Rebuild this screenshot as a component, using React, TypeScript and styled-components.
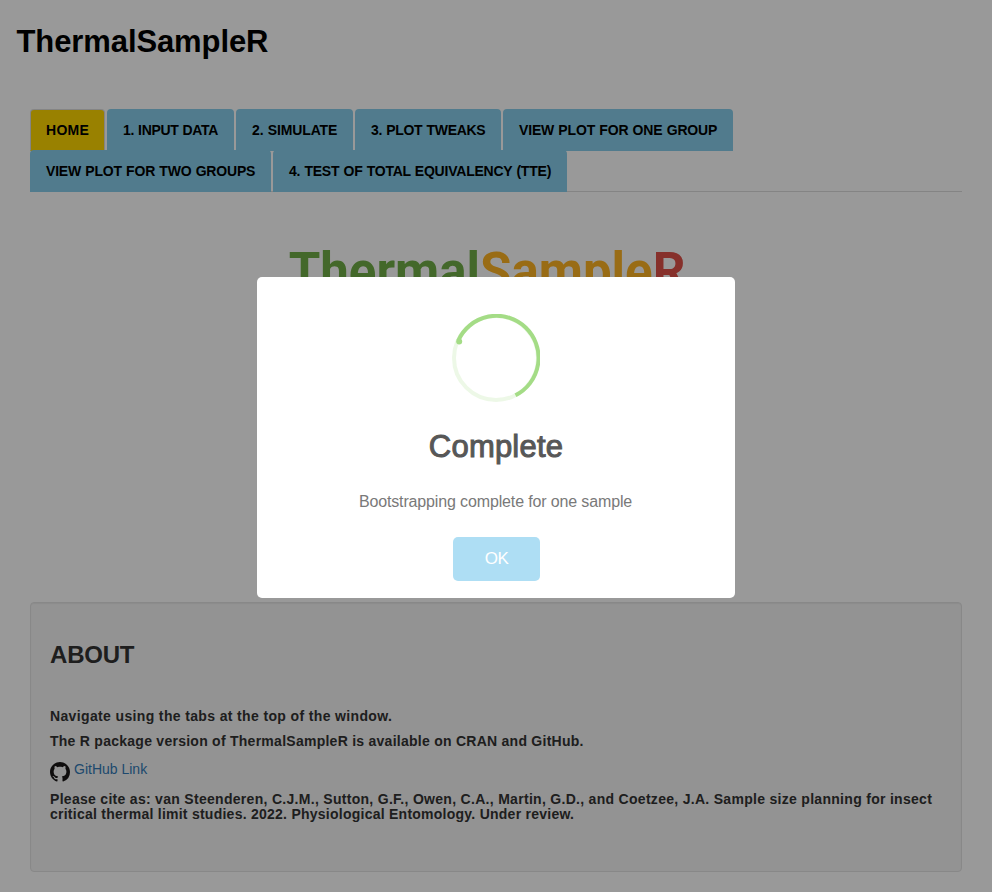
import React from "react";
import styled, { createGlobalStyle } from "styled-components";

const GlobalStyle = createGlobalStyle`
  *, *::before, *::after { box-sizing: border-box; }
  html, body { margin: 0; height: 892px; overflow: hidden; background: #fff; }
  body { font: 14px/20px "Liberation Sans", Arial, sans-serif; color: #333; }
`;

const Page = styled.div`
  height: 892px;
  padding: 21px 30px 0;
  background: #fff;
  display: flex;
  flex-direction: column;
`;
const Title = styled.h1`
  margin: 0 0 0 -13.5px;
  height: 88px;
  font-size: 31px;
  line-height: 41px;
  letter-spacing: -0.1px;
  color: #000;
`;
const TabList = styled.ul`
  list-style: none;
  margin: 0;
  padding: 0;
  height: 83px;
  display: flex;
  flex-wrap: wrap;
  align-content: flex-start;
  column-gap: 2px;
  border-bottom: 1px solid #ddd;
`;
const Tab = styled.li<{ $width: number; $tracking: number; $active?: boolean }>`
  width: ${(p) => p.$width}px;
  height: 42px;
  margin-bottom: -1px;
  padding: 10px 0 10px 15px;
  border: 1px solid ${(p) => (p.$active ? "#ddd" : "transparent")};
  ${(p) => p.$active && "border-bottom-color: transparent;"}
  border-radius: 4px 4px 0 0;
  background: ${(p) => (p.$active ? "#ffd700" : "#87ceeb")};
  color: #000;
  font-weight: 700;
  letter-spacing: ${(p) => p.$tracking}px;
  word-spacing: ${(p) => (p.$active ? 0 : 0.5)}px;
  white-space: nowrap;
`;
const Banner = styled.div`
  height: 410px;
  padding: 48px 18px 0 0;
  text-align: center;
  font: 700 51px/64px Roboto, sans-serif;
  color: #70ad47;
`;
const Accent = styled.span<{ $color: string }>`
  color: ${(p) => p.$color};
`;
const Well = styled.section`
  height: 270px;
  padding: 38px 19px 19px;
  border: 1px solid #e3e3e3;
  border-radius: 4px;
  background: #f5f5f5;
  box-shadow: inset 0 1px 1px rgba(0, 0, 0, 0.05);
`;
const Heading = styled.h2`
  margin: 0 0 40px;
  font-size: 24px;
  line-height: 28px;
  letter-spacing: -0.2px;
`;
const Note = styled.p<{ $tracking: number; $gap?: number }>`
  margin: 0 0 ${(p) => p.$gap ?? 0}px;
  font-weight: 700;
  line-height: 15px;
  letter-spacing: ${(p) => p.$tracking}px;
  white-space: nowrap;
`;
const RepoLink = styled.a`
  display: flex;
  height: 33px;
  gap: 4px;
  color: #337ab7;
  text-decoration: none;
  line-height: 20px;
`;
const RepoIcon = styled.svg`
  width: 20px;
  height: 20px;
  margin-top: 3px;
  fill: #191717;
`;
const Overlay = styled.div`
  position: fixed;
  inset: 0;
  background: rgba(0, 0, 0, 0.4);
`;
const Modal = styled.div`
  position: fixed;
  left: 257px;
  top: 277px;
  width: 478px;
  height: 321px;
  padding: 37px 17px 17px;
  border-radius: 5px;
  background: #fff;
  display: flex;
  flex-direction: column;
  align-items: center;
`;
const Ring = styled.svg`
  width: 88px;
  height: 88px;
  flex: none;
`;
const ModalTitle = styled.h2`
  margin: 25px 0;
  font-size: 31px;
  line-height: 40px;
  font-weight: 400;
  -webkit-text-stroke: 1px #575757;
  letter-spacing: 0.2px;
  color: #575757;
`;
const ModalText = styled.p`
  margin: 0 1px 0 0;
  font-size: 16px;
  line-height: 20px;
  letter-spacing: -0.14px;
  color: #797979;
`;
const OkButton = styled.button`
  width: 87px;
  height: 44px;
  margin-top: 25px;
  padding: 0 0 0 1px;
  border: 0;
  border-radius: 5px;
  background: #aedef4;
  color: #fff;
  font: 17px "Liberation Sans", Arial, sans-serif;
  letter-spacing: -0.5px;
`;

const tabs = [
  { label: "HOME", width: 75, tracking: 0.3, active: true },
  { label: "1. INPUT DATA", width: 127, tracking: -0.32 },
  { label: "2. SIMULATE", width: 117, tracking: -0.12 },
  { label: "3. PLOT TWEAKS", width: 146, tracking: -0.29 },
  { label: "VIEW PLOT FOR ONE GROUP", width: 230, tracking: -0.16 },
  { label: "VIEW PLOT FOR TWO GROUPS", width: 241, tracking: -0.18 },
  { label: "4. TEST OF TOTAL EQUIVALENCY (TTE)", width: 294, tracking: -0.22 },
];

export default function App() {
  return (
    <>
      <GlobalStyle />
      <Page>
        <Title>ThermalSampleR</Title>
        <TabList>
          {tabs.map((t) => (
            <Tab key={t.label} $width={t.width} $tracking={t.tracking} $active={t.active}>
              {t.label}
            </Tab>
          ))}
        </TabList>
        <Banner>
          Thermal<Accent $color="#ffb423">Sample</Accent>
          <Accent $color="#df5048">R</Accent>
        </Banner>
        <Well>
          <Heading>ABOUT</Heading>
          <Note $gap={10} $tracking={0.36}>Navigate using the tabs at the top of the window.</Note>
          <Note $gap={10} $tracking={0.26}>
            The R package version of ThermalSampleR is available on CRAN and GitHub.
          </Note>
          <RepoLink href="#">
            <RepoIcon viewBox="0 0 16 16">
              <path d="M8 0C3.58 0 0 3.58 0 8c0 3.54 2.29 6.53 5.47 7.59.4.07.55-.17.55-.38 0-.19-.01-.82-.01-1.49-2.01.37-2.53-.49-2.69-.94-.09-.23-.48-.94-.82-1.13-.28-.15-.68-.52-.01-.53.63-.01 1.08.58 1.23.82.72 1.21 1.87.87 2.33.66.07-.52.28-.87.51-1.07-1.78-.2-3.64-.89-3.64-3.95 0-.87.31-1.59.82-2.15-.08-.2-.36-1.02.08-2.12 0 0 .67-.21 2.2.82.64-.18 1.32-.27 2-.27s1.36.09 2 .27c1.53-1.04 2.2-.82 2.2-.82.44 1.1.16 1.92.08 2.12.51.56.82 1.27.82 2.15 0 3.07-1.87 3.75-3.65 3.95.29.25.54.73.54 1.48 0 1.07-.01 1.93-.01 2.2 0 .21.15.46.55.38A8.01 8.01 0 0 0 16 8c0-4.42-3.58-8-8-8z" />
            </RepoIcon>
            GitHub Link
          </RepoLink>
          <Note $tracking={0.295}>
            Please cite as: van Steenderen, C.J.M., Sutton, G.F., Owen, C.A., Martin, G.D., and
            Coetzee, J.A. Sample size planning for insect
          </Note>
          <Note $tracking={0.25}>
            critical thermal limit studies. 2022. Physiological Entomology. Under review.
          </Note>
        </Well>
      </Page>
      <Overlay />
      <Modal>
        <Ring viewBox="0 0 88 88" fill="none" strokeWidth="4">
          <circle cx="44" cy="44" r="42" stroke="#a4dc86" strokeOpacity="0.2" />
          <path d="M6.3 26.5 A42 42 0 1 1 63.5 81.3" stroke="#a4dc86" />
          <circle cx="7.2" cy="27.6" r="3" fill="#a4dc86" />
        </Ring>
        <ModalTitle>Complete</ModalTitle>
        <ModalText>Bootstrapping complete for one sample</ModalText>
        <OkButton>OK</OkButton>
      </Modal>
    </>
  );
}
